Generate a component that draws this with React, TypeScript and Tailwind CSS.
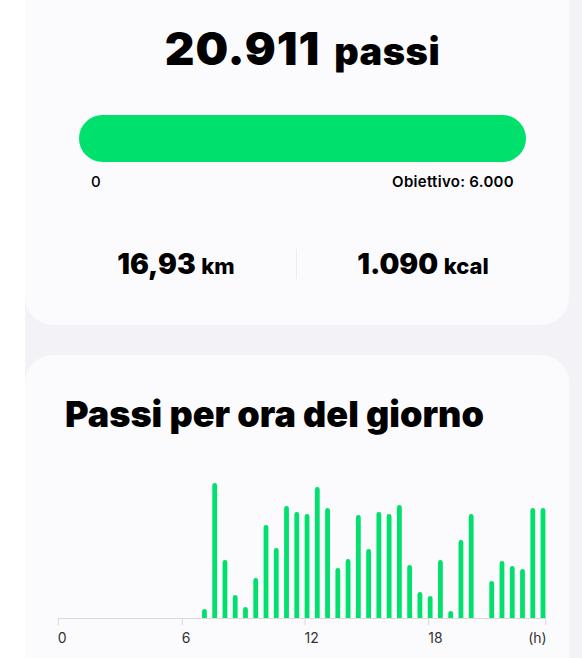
const hourly = [
  0, 0, 0, 0, 0, 0, 0, 0, 0, 0, 0, 0, 0, 0,
  9, 135, 58, 23, 11, 40, 93, 70, 112, 106,
  104, 131, 110, 50, 59, 103, 69, 106, 104, 113,
  53, 26, 22, 58, 7, 78, 104, 0, 37, 57, 52, 49, 110, 110,
]

const BASE = 158
const AX0 = 33.3
const AX1 = 520.7

const ticks = [
  { x: AX0, label: '0', anchor: 'start' },
  { x: 157.3, label: '6', anchor: 'start' },
  { x: 280, label: '12', anchor: 'start' },
  { x: 403.7, label: '18', anchor: 'start' },
  { x: AX1, label: '(h)', anchor: 'end' },
]

const StepsChart = () => {
  return (
    <svg width="544" height="200" viewBox="0 0 544 200" className="mt-[28px] block">
      <defs>
        <clipPath id="plot">
          <rect x="0" y="0" width="544" height={BASE} />
        </clipPath>
      </defs>
      <g clipPath="url(#plot)">
        {hourly.map((h, i) =>
          h > 0 ? (
            <rect
              key={i}
              x={35.8 + i * 10.26 - 2.4}
              y={BASE - h}
              width="4.8"
              height={h + 4}
              rx="2.4"
              fill="#00e06c"
            />
          ) : null
        )}
      </g>
      <line x1={AX0} y1={BASE + 0.5} x2={AX1} y2={BASE + 0.5} stroke="#d9d9dc" strokeWidth="1" />
      {ticks.map((t) => (
        <g key={t.label}>
          <line x1={t.x} y1={BASE} x2={t.x} y2={BASE + 7} stroke="#d9d9dc" strokeWidth="1" />
          <text
            x={t.x + (t.anchor === 'start' ? -0.5 : 1)}
            y={BASE + 25}
            textAnchor={t.anchor as 'start' | 'end'}
            fontSize="14"
            fill="#333"
            fontFamily="Inter, 'Liberation Sans', sans-serif">
            {t.label}
          </text>
        </g>
      ))}
    </svg>
  )
}

const App = () => {
  return (
    <div className="min-h-screen bg-white pl-[25px] font-['Inter','Liberation_Sans',sans-serif] text-black">
      <div className="min-h-screen bg-[#f3f2f6] pr-[13px]">
        {/* Summary */}
        <section className="rounded-b-[28px] bg-[#fbfbfe] pb-[46px] pl-[54px] pr-[43px] pt-[25px]">
          <h1 className="text-center text-[46px] font-black leading-none tracking-[0.9px]">
            20.911 <span className="ml-1 text-[38px] tracking-[0.5px]">passi</span>
          </h1>

          <div className="mt-[44px] h-[47px] w-full rounded-full bg-[#00e06c]" />
          <div className="mt-[10px] flex justify-between px-3 text-[15px] font-semibold leading-5">
            <span className="font-medium">0</span>
            <span className="tracking-[0.3px]">Obiettivo: 6.000</span>
          </div>

          <div className="mt-[57px] flex h-[30px] items-center justify-center">
            <div className="w-[240px] shrink-0 text-center text-[28px] font-black leading-none">
              16,93 <span className="text-[22px] font-extrabold">km</span>
            </div>
            <div className="h-[30px] w-px shrink-0 bg-[#ececef]" />
            <div className="w-[252px] shrink-0 text-center text-[28px] font-black leading-none">
              1.090 <span className="text-[22px] font-extrabold">kcal</span>
            </div>
          </div>
        </section>

        {/* Hourly chart */}
        <section className="mt-[30px] min-h-[340px] rounded-t-[28px] bg-[#fbfbfe] pt-[41px]">
          <h2 className="pl-[40px] text-[36px] font-black leading-none">
            Passi per ora del giorno
          </h2>
          <StepsChart />
        </section>
      </div>
    </div>
  )
}

export default App
